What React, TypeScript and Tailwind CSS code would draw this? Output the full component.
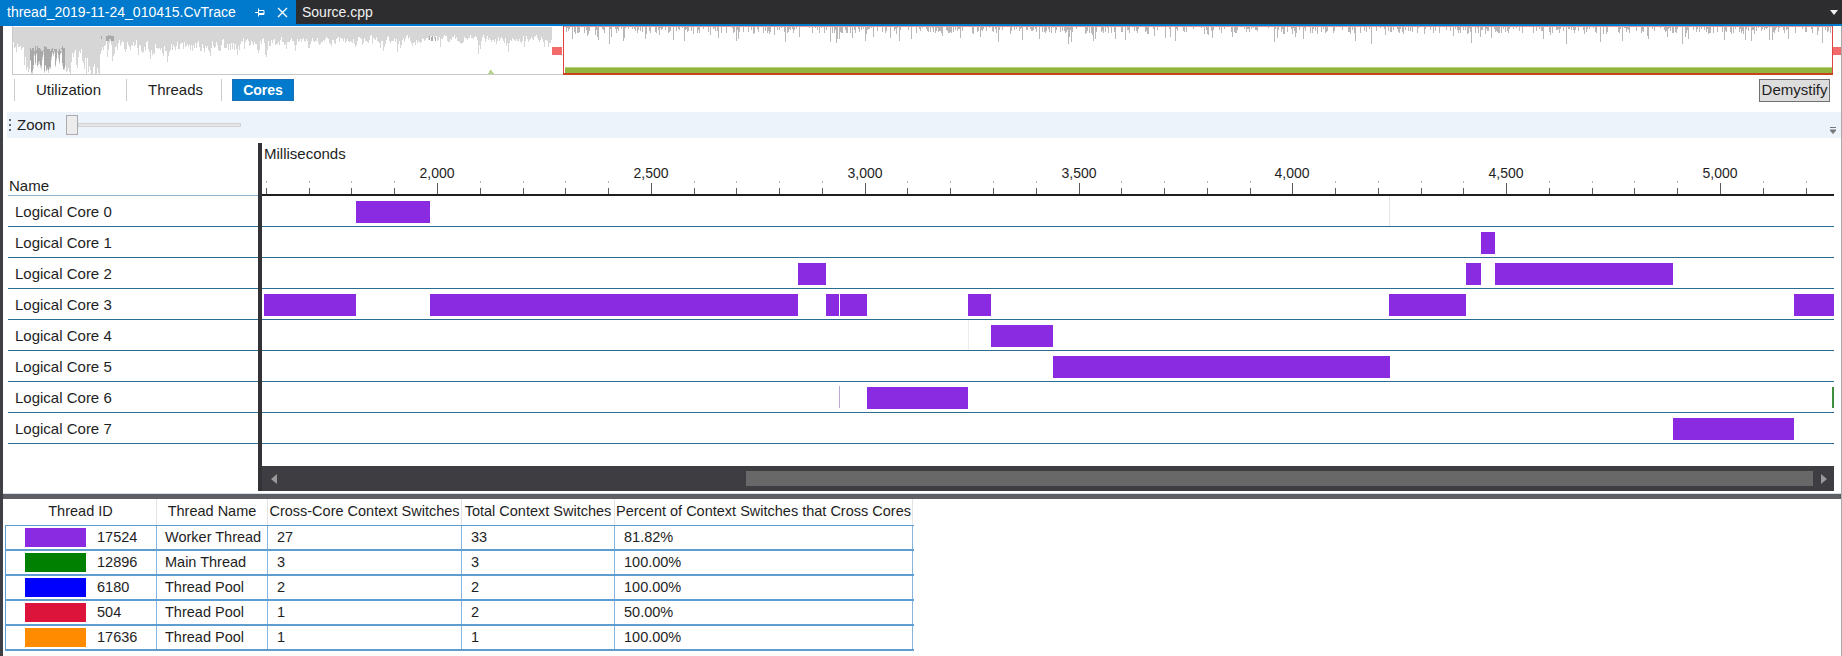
import React from "react";

type Seg = { l: number; w: number };
type Mark = { l: number; c: string; w?: number; t?: number; h?: number };
type CoreRow = { name: string; bars: Seg[]; marks?: Mark[] };

const PURPLE = "#8a2be2";

// bar positions are px from the left edge of the timeline (x = 175 + (ms - 2000) * 0.4277)
const cores: CoreRow[] = [
  { name: "Logical Core 0", bars: [{ l: 94, w: 74 }], marks: [{ l: 1127, c: "#e4e4e4" }] },
  { name: "Logical Core 1", bars: [{ l: 1219, w: 14 }] },
  {
    name: "Logical Core 2",
    bars: [
      { l: 536, w: 28 },
      { l: 1204, w: 15 },
      { l: 1233, w: 178 },
    ],
  },
  {
    name: "Logical Core 3",
    bars: [
      { l: 2, w: 92 },
      { l: 168, w: 368 },
      { l: 564, w: 13 },
      { l: 578, w: 27 },
      { l: 706, w: 23 },
      { l: 1127, w: 77 },
      { l: 1532, w: 40 },
    ],
  },
  { name: "Logical Core 4", bars: [{ l: 729, w: 62 }], marks: [{ l: 706, c: "#ececec" }] },
  { name: "Logical Core 5", bars: [{ l: 791, w: 337 }] },
  {
    name: "Logical Core 6",
    bars: [{ l: 605, w: 101 }],
    marks: [
      { l: 577, c: "#b9a9d2", t: 4, h: 22 },
      { l: 1570, c: "#3c8f3c", w: 2, t: 5, h: 21 },
    ],
  },
  { name: "Logical Core 7", bars: [{ l: 1411, w: 121 }] },
];

const threads = [
  { id: "17524", color: "#8a2be2", name: "Worker Thread", cross: "27", total: "33", pct: "81.82%" },
  { id: "12896", color: "#008000", name: "Main Thread", cross: "3", total: "3", pct: "100.00%" },
  { id: "6180", color: "#0000ff", name: "Thread Pool", cross: "2", total: "2", pct: "100.00%" },
  { id: "504", color: "#dc143c", name: "Thread Pool", cross: "1", total: "2", pct: "50.00%" },
  { id: "17636", color: "#ff8c00", name: "Thread Pool", cross: "1", total: "1", pct: "100.00%" },
];

const cols = [152, 111, 194, 153, 298];

function mulberry32(a: number) {
  return function () {
    a |= 0;
    a = (a + 0x6d2b79f5) | 0;
    let t = Math.imul(a ^ (a >>> 15), 1 | a);
    t = (t + Math.imul(t ^ (t >>> 7), 61 | t)) ^ t;
    return ((t ^ (t >>> 14)) >>> 0) / 4294967296;
  };
}

function buildOverview() {
  const r = mulberry32(20191124);
  let light = "";
  let dark = "";
  let spikes = "";
  let prev = 12;
  for (let x = 10; x < 549; x++) {
    const px = x + 3;
    const base = px < 24 ? 22 : px < 92 ? 36 : px < 100 ? 46 : px < 240 ? 20 : px < 360 ? 16 : 13;
    let d = base * (0.55 + r() * 0.9);
    if (r() < 0.09) d += 6 + r() * 18;
    d = Math.min(48, 0.4 * prev + 0.6 * d);
    prev = d;
    light += `M${x + 0.5} 1V${d.toFixed(1)}`;
    if (px >= 30 && px <= 64) {
      const top = 20 + r() * 6;
      const bot = d - 1 - r() * 3;
      if (bot > top) dark += `M${x + 0.5} ${top.toFixed(1)}V${bot.toFixed(1)}`;
    }
    if (((px >= 100 && px <= 116) || (px >= 428 && px <= 436)) && r() < 0.6) {
      dark += `M${x + 0.5} ${(8 + r() * 3).toFixed(1)}V${(12 + r() * 4).toFixed(1)}`;
    }
  }
  for (let x = 562; x < 1829; x++) {
    if (r() < 0.45) {
      let d = 2 + r() * 6;
      if (r() < 0.15) d += 4 + r() * 7;
      spikes += `M${x + 0.5} 1V${d.toFixed(1)}`;
    }
  }
  return { light, dark, spikes };
}

const ticks: { x: number; t: number; major: boolean }[] = [];
for (let t = 1600; t <= 5200; t += 100) {
  ticks.push({ x: Math.round(175 + (t - 2000) * 0.42767), t, major: t % 500 === 0 });
}

function PinIcon() {
  return (
    <svg width="10" height="9" viewBox="0 0 10 9" className="shrink-0">
      <path d="M0 4.5h3M3.5 0.5v8M3.5 2.5h5.5v4H3.5M3.5 5.5h5.5" stroke="#ffffff" strokeWidth="1" fill="none" />
    </svg>
  );
}

function CloseIcon() {
  return (
    <svg width="11" height="11" viewBox="0 0 11 11" className="ml-[12px] shrink-0">
      <path d="M1 1l9 9M10 1l-9 9" stroke="#ffffff" strokeWidth="1.4" />
    </svg>
  );
}

function Sep() {
  return <div className="h-[22px] w-px shrink-0 bg-[#cccccc]" />;
}

export default function App() {
  const ov = buildOverview();

  return (
    <div className="h-[656px] w-[1842px] overflow-hidden bg-white font-['Liberation_Sans',Arial,sans-serif] text-[15px] text-[#1e1e1e]">
      {/* document tabs */}
      <div className="flex h-[24px] items-center bg-[#2d2d30]">
        <div className="flex h-full w-[296px] items-center bg-[#007acc] text-[14px] text-white">
          <span className="w-[255px] whitespace-nowrap pl-[7px]">thread_2019-11-24_010415.CvTrace</span>
          <PinIcon />
          <CloseIcon />
        </div>
        <span className="ml-[6px] text-[14px] text-[#f1f1f1]">Source.cpp</span>
        <svg width="8" height="5" viewBox="0 0 8 5" className="ml-auto mr-[4px]">
          <path d="M0 0h8L4 5z" fill="#f1f1f1" />
        </svg>
      </div>
      <div className="h-[2px] bg-[#007acc]" />

      <div className="flex h-[630px] flex-col border-l-[3px] border-r border-l-[#3f3f46] border-r-[#a9a9a9]">
        {/* overview graph */}
        <svg width="1838" height="50" className="block shrink-0" shapeRendering="crispEdges">
          <path d={ov.light} stroke="#d6d6d6" strokeWidth="1" fill="none" />
          <path d={ov.dark} stroke="#a9a9a9" strokeWidth="1" fill="none" />
          <rect x="9" y="0" width="1" height="49" fill="#c9c9c9" />
          <rect x="9" y="48" width="551" height="1" fill="#c9c9c9" />
          <polygon points="485,48 488,43 491,48" fill="#b7d48e" />
          <path d={ov.spikes} stroke="#b8b8b8" strokeWidth="1" fill="none" />
          <rect x="562" y="41" width="1267" height="6" fill="#93b33f" />
          <rect x="562" y="41" width="1267" height="1" fill="#b9d37a" />
          <rect x="560" y="0" width="1270" height="1" fill="#ee9a9a" />
          <rect x="560" y="0" width="1" height="49" fill="#e04545" />
          <rect x="1829" y="0" width="1" height="49" fill="#e04545" />
          <rect x="560" y="47" width="1270" height="2" fill="#c8431c" />
          <rect x="549" y="21" width="10" height="8" fill="#f26a6a" />
          <rect x="1830" y="21" width="8" height="8" fill="#f26a6a" />
        </svg>

        {/* view switch */}
        <div className="mt-px flex h-[26px] shrink-0 items-center">
          <div className="ml-[11px]">
            <Sep />
          </div>
          <span className="w-[111px] pl-[21px]">Utilization</span>
          <Sep />
          <span className="w-[94px] pl-[21px]">Threads</span>
          <Sep />
          <div className="ml-[10px] flex h-[22px] w-[62px] items-center justify-center border border-[#1c6fb5] bg-[#007acc] text-[14px] font-bold text-white">
            Cores
          </div>
          <div className="flex-1" />
          <div className="mr-[11px] flex h-[23px] w-[71px] items-center justify-center border border-[#707070] bg-[#dddddd]">
            Demystify
          </div>
        </div>

        {/* zoom toolbar */}
        <div className="ml-[4px] mt-[9px] flex h-[26px] shrink-0 items-center bg-[#edf3fa]">
          <div className="ml-[2px] flex flex-col gap-[3px]">
            <div className="h-[2px] w-[2px] bg-[#6a6a6a]" />
            <div className="h-[2px] w-[2px] bg-[#6a6a6a]" />
            <div className="h-[2px] w-[2px] bg-[#6a6a6a]" />
          </div>
          <span className="ml-[6px] w-[49px]">Zoom</span>
          <div className="h-[20px] w-[12px] border border-[#acacac] bg-[#ececec]" />
          <div className="h-[4px] w-[163px] border border-[#d2d2d2] bg-[#e6e6e6]" />
          <div className="flex-1" />
          <svg width="6" height="7" viewBox="0 0 6 7" className="mr-[5px] mt-[10px]">
            <path d="M0 0.5h6M0 3h6L3 6.5z" stroke="#777777" strokeWidth="1" fill="#777777" />
          </svg>
        </div>

        {/* cores timeline */}
        <div className="mt-[5px] flex h-[348px] shrink-0">
          <div className="flex w-[255px] flex-col">
            <div className="flex h-[52px] items-end pb-px pl-[6px] leading-[17px]">Name</div>
            <div className="ml-[5px] h-px bg-[#8fb2cc]" />
            {cores.map((c) => (
              <div key={c.name} className="ml-[5px] flex h-[31px] items-center border-b border-[#2a6d93] pl-[7px] pt-[2px]">
                {c.name}
              </div>
            ))}
          </div>
          <div className="w-[4px] bg-[#333337]" />
          <div className="flex w-[1572px] flex-col">
            <div className="relative h-[51px]">
              <span className="absolute left-[2px] top-[2px] leading-[17px]">Milliseconds</span>
              <svg width="1572" height="51" className="absolute left-0 top-0" shapeRendering="crispEdges">
                {ticks.map((k) =>
                  k.major ? (
                    <rect key={k.t} x={k.x} y={40} width="1" height="11" fill="#5a5a5a" />
                  ) : (
                    <g key={k.t}>
                      <rect x={k.x} y={38} width="1" height="2" fill="#b5b5b5" />
                      <rect x={k.x} y={45} width="1" height="6" fill="#5a5a5a" />
                    </g>
                  )
                )}
              </svg>
              {ticks
                .filter((k) => k.major)
                .map((k) => (
                  <span
                    key={k.t}
                    className="absolute top-[22px] -translate-x-1/2 text-[14px] leading-[16px]"
                    style={{ left: k.x }}
                  >
                    {k.t.toLocaleString("en-US")}
                  </span>
                ))}
            </div>
            <div className="h-[2px] bg-[#1e1e1e]" />
            {cores.map((c) => (
              <div key={c.name} className="relative h-[31px] border-b border-[#2a6d93]">
                {c.marks?.map((m, i) => (
                  <div
                    key={"m" + i}
                    className="absolute"
                    style={{ left: m.l, width: m.w ?? 1, top: m.t ?? 0, height: m.h ?? 30, background: m.c }}
                  />
                ))}
                {c.bars.map((b, i) => (
                  <div
                    key={i}
                    className="absolute top-[5px] h-[22px]"
                    style={{ left: b.l, width: b.w, background: PURPLE }}
                  />
                ))}
              </div>
            ))}
            <div className="h-[22px]" />
            <div className="flex h-[25px] items-center bg-[#3e3e42]">
              <svg width="7" height="10" viewBox="0 0 7 10" className="ml-[8px] shrink-0">
                <path d="M7 0v10L1 5z" fill="#999999" />
              </svg>
              <div className="ml-[469px] h-[15px] w-[1067px] shrink-0 bg-[#686868]" />
              <svg width="7" height="10" viewBox="0 0 7 10" className="ml-[8px] shrink-0">
                <path d="M0 0v10L6 5z" fill="#999999" />
              </svg>
            </div>
          </div>
          <div className="w-[7px]" />
        </div>

        {/* splitter */}
        <div className="mt-[2px] h-px shrink-0 bg-[#d3e0ec]" />
        <div className="h-[5px] shrink-0 bg-[#5e5e64]" />

        {/* thread table */}
        <div className="ml-[2px] flex h-[26px] shrink-0 items-center text-[14.5px]">
          {["Thread ID", "Thread Name", "Cross-Core Context Switches", "Total Context Switches", "Percent of Context Switches that Cross Cores"].map(
            (h, i) => (
              <div
                key={h}
                className="flex h-full items-center justify-center whitespace-nowrap border-r border-[#e3e3e3]"
                style={{ width: cols[i] }}
              >
                {h}
              </div>
            )
          )}
        </div>
        <div className="ml-[2px] w-[909px] shrink-0 border-l border-t border-[#5d9dd0] text-[14.5px]">
          {threads.map((t) => (
            <div key={t.id} className="flex h-[25px] border-b-2 border-[#5d9dd0]">
              <div className="flex items-center border-r border-[#86b6dd]" style={{ width: cols[0] - 1 }}>
                <div className="ml-[19px] h-[19px] w-[61px] shrink-0" style={{ background: t.color }} />
                <span className="ml-[11px]">{t.id}</span>
              </div>
              <div className="flex items-center whitespace-nowrap border-r border-[#86b6dd] pl-[8px]" style={{ width: cols[1] }}>
                {t.name}
              </div>
              <div className="flex items-center border-r border-[#86b6dd] pl-[9px]" style={{ width: cols[2] }}>
                {t.cross}
              </div>
              <div className="flex items-center border-r border-[#86b6dd] pl-[9px]" style={{ width: cols[3] }}>
                {t.total}
              </div>
              <div className="flex items-center border-r border-[#86b6dd] pl-[9px]" style={{ width: cols[4] }}>
                {t.pct}
              </div>
            </div>
          ))}
        </div>
      </div>
    </div>
  );
}
